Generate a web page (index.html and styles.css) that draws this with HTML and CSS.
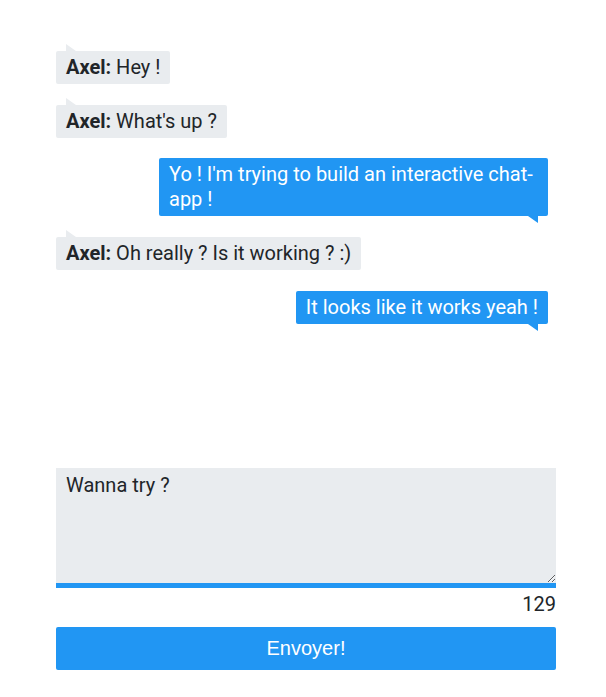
FILE: index.html
```html
<!DOCTYPE html>
<html>
<head>
<meta charset="utf-8">
<link rel="stylesheet" href="styles.css">
</head>
<body>
<div class="chat">
  <div class="messages">
    <div class="msg msg-in"><b>Axel:</b> Hey !</div>
    <div class="msg msg-in"><b>Axel:</b> What's up ?</div>
    <div class="msg msg-out">Yo ! I'm trying to build an interactive chat-app !</div>
    <div class="msg msg-in"><b>Axel:</b> Oh really ? Is it working ? :)</div>
    <div class="msg msg-out">It looks like it works yeah !</div>
  </div>
  <form class="composer">
    <textarea class="input">Wanna try ?</textarea>
    <div class="counter">129</div>
    <button type="button" class="send">Envoyer!</button>
  </form>
</div>
</body>
</html>
```
FILE: styles.css
```css
html, body {
  margin: 0;
  padding: 0;
  background: #ffffff;
}
body {
  font-family: Roboto, "Liberation Sans", sans-serif;
  font-size: 20px;
  color: #212529;
}
.chat {
  width: 500px;
  margin-left: 56px;
}
.messages {
  box-sizing: border-box;
  height: 468px;
  padding-top: 51px;
  display: flex;
  flex-direction: column;
  align-items: flex-start;
  gap: 20.67px;
}
.msg {
  position: relative;
  box-sizing: border-box;
  max-width: 389px;
  padding: 4px 10px;
  line-height: 25px;
  border-radius: 2px;
}
.msg b {
  font-weight: 700;
}
.msg-in {
  background: #e9ecef;
}
.msg-in::before {
  content: "";
  position: absolute;
  top: -7px;
  left: 10px;
  width: 0;
  height: 0;
  border-bottom: 7px solid #e9ecef;
  border-right: 10px solid transparent;
}
.msg-out {
  align-self: flex-end;
  margin-right: 8px;
  background: #2196f3;
  color: #ffffff;
}
.msg-out::after {
  content: "";
  position: absolute;
  bottom: -7px;
  right: 10px;
  width: 0;
  height: 0;
  border-top: 7px solid #2196f3;
  border-left: 10px solid transparent;
}
.composer {
  display: flex;
  flex-direction: column;
  margin: 0;
}
.input {
  box-sizing: border-box;
  display: block;
  width: 500px;
  height: 120px;
  margin: 0;
  padding: 5px 10px;
  border: none;
  border-bottom: 5px solid #2196f3;
  border-radius: 0;
  background: #e9ecef;
  font-family: Roboto, "Liberation Sans", sans-serif;
  font-size: 20px;
  line-height: 25px;
  color: #212529;
  outline: none;
}
.counter {
  margin-top: 4px;
  text-align: right;
  line-height: 25px;
  font-size: 20px;
}
.send {
  margin-top: 10px;
  height: 43px;
  width: 100%;
  border: none;
  border-radius: 2px;
  background: #2196f3;
  color: #ffffff;
  font-family: "Liberation Sans", Arial, sans-serif;
  font-size: 20px;
  padding: 0;
}
```
